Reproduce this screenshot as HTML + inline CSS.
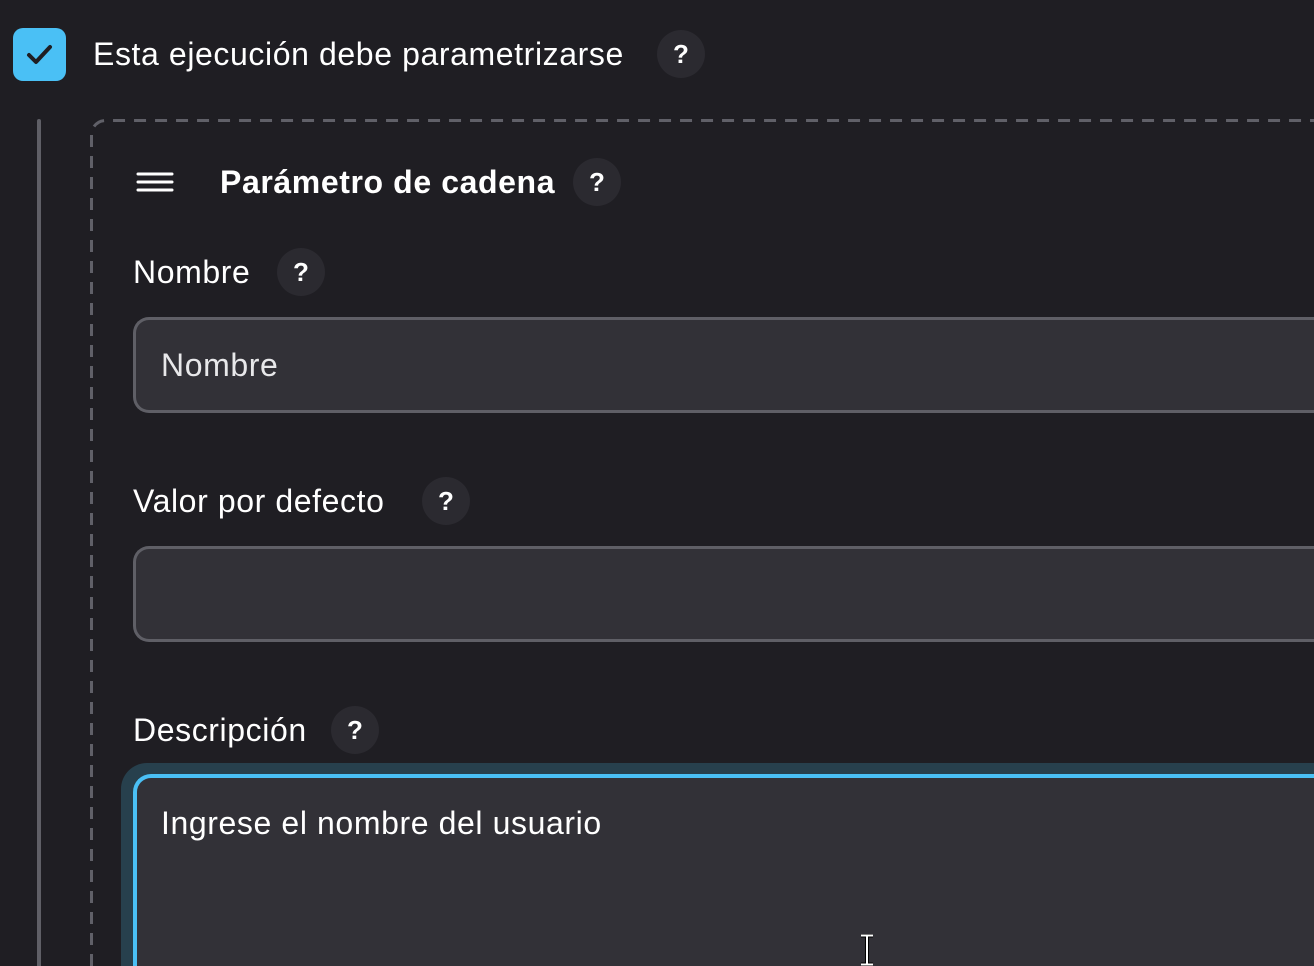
<!DOCTYPE html>
<html><head><meta charset="utf-8"><style>
html,body{margin:0;padding:0;width:1314px;height:966px;overflow:hidden;background:#1f1e23;font-family:"Liberation Sans",sans-serif;color:#fff;}
.wrap{position:relative;width:1314px;height:966px;overflow:hidden;}
.a{position:absolute;}
.q{position:absolute;width:48px;height:48px;border-radius:50%;background:#2b2a30;color:#fff;font-size:26px;font-weight:bold;text-align:center;line-height:48px;}
.lbl{position:absolute;font-size:32px;line-height:40px;white-space:nowrap;letter-spacing:0.6px;}
.inp{position:absolute;left:133px;width:1181px;border:3px solid #5f5f66;border-right:none;border-radius:16px 0 0 16px;background:#323137;box-sizing:border-box;}
</style></head><body><div class="wrap">
<div class="a" style="left:13px;top:28px;width:53px;height:53px;border-radius:10px;background:#4ac0f5;">
<svg width="53" height="53"><path d="M16 27 L23 34 L37 19" stroke="#1f1e23" stroke-width="4" fill="none" stroke-linecap="round" stroke-linejoin="round"/></svg></div>
<div class="lbl" style="left:93px;top:34px;">Esta ejecución debe parametrizarse</div>
<div class="q" style="left:657px;top:30px;">?</div>
<div class="a" style="left:37px;top:119px;width:4px;height:847px;background:#5f5f66;border-radius:2px 2px 0 0;"></div>
<svg class="a" style="left:90px;top:119px" width="1224" height="847"><path d="M1.5 847 V15.5 A14 14 0 0 1 15.5 1.5 H1224" fill="none" stroke="#606068" stroke-width="3" stroke-dasharray="12 9"/></svg>
<svg class="a" style="left:136px;top:172px" width="38" height="22"><g stroke="#fff" stroke-width="3" stroke-linecap="round"><line x1="2" y1="2" x2="36" y2="2"/><line x1="2" y1="10" x2="36" y2="10"/><line x1="2" y1="18" x2="36" y2="18"/></g></svg>
<div class="lbl" style="left:220px;top:162px;font-weight:bold;">Parámetro de cadena</div>
<div class="q" style="left:573px;top:158px;">?</div>
<div class="lbl" style="left:133px;top:252px;">Nombre</div>
<div class="q" style="left:277px;top:248px;">?</div>
<div class="inp" style="top:317px;height:96px;"></div>
<div class="lbl" style="left:161px;top:345px;color:#e8e8ea;">Nombre</div>
<div class="lbl" style="left:133px;top:481px;">Valor por defecto</div>
<div class="q" style="left:422px;top:477px;">?</div>
<div class="inp" style="top:546px;height:96px;"></div>
<div class="lbl" style="left:133px;top:710px;">Descripción</div>
<div class="q" style="left:331px;top:706px;">?</div>
<div class="a" style="left:121px;top:763px;width:1193px;height:203px;border-radius:26px 0 0 0;background:#27404d;"></div>
<div class="a" style="left:133px;top:774px;width:1181px;height:192px;border-top:4px solid #4ac0f5;border-left:4px solid #4ac0f5;border-radius:18px 0 0 0;background:#323137;box-sizing:border-box;"></div>
<div class="lbl" style="left:161px;top:803px;">Ingrese el nombre del usuario</div>
<svg class="a" style="left:858px;top:934px" width="18" height="32"><path d="M3 1.5 H15 M9 1.5 V30.5 M3 30.5 H15" stroke="#000" stroke-width="4"/><path d="M3 1.5 H15 M9 1.5 V30.5 M3 30.5 H15" stroke="#fff" stroke-width="2"/></svg>
</div></body></html>
